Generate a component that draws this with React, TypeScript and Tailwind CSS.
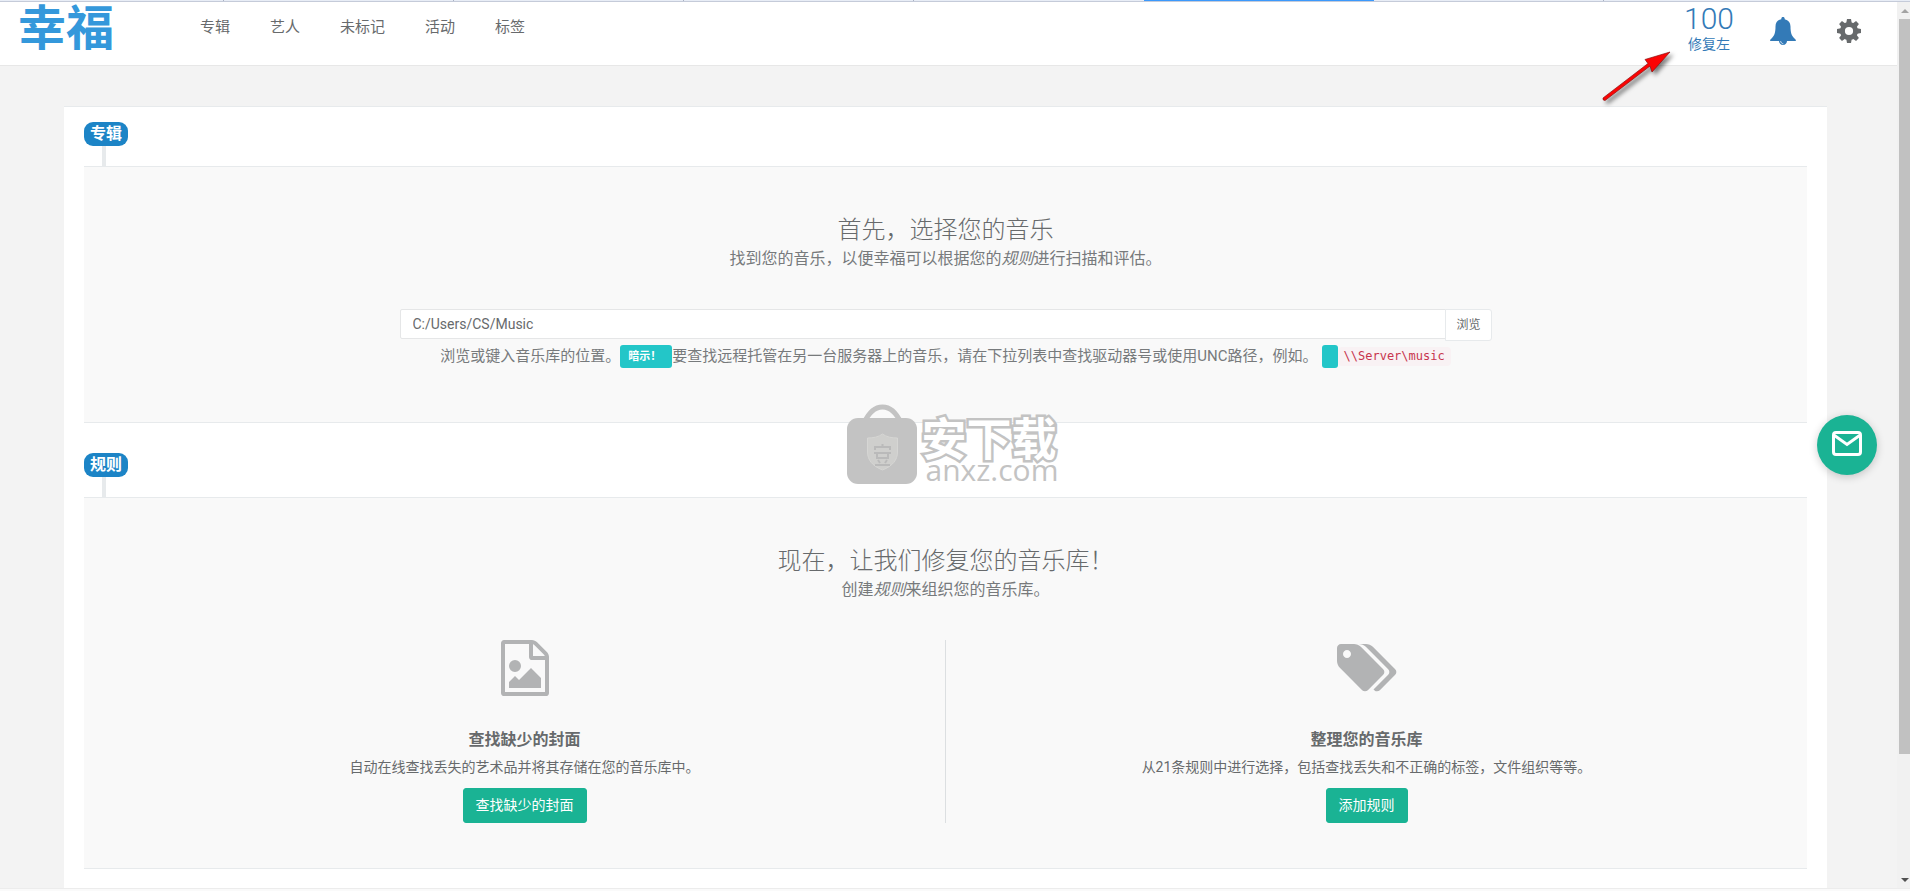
import { useState } from 'react';
import type { ReactNode } from 'react';

const NAV = ['专辑', '艺人', '未标记', '活动', '标签'];

const TOOTH_ANGLES = [0, 45, 90, 135, 180, 225, 270, 315];

function BellIcon() {
  return (
    <svg width="26" height="28" viewBox="0 0 26 28" fill="currentColor" aria-hidden="true">
      <path d="M13 0c1 0 1.700.7 1.700 1.700v.5c3.700.9 5.800 3.300 5.800 7.300 0 6.200 1.200 9.300 3.500 11.400 1.100 1 1.900 1.600 1.900 3.100H.1c0-1.500.8-2.100 1.900-3.100 2.300-2.100 3.500-5.200 3.500-11.400 0-4 2.100-6.400 5.800-7.300v-.5C11.300.7 12 0 13 0z" />
      <path d="M9 24h8c0 2.300-1.700 4-4 4s-4-1.700-4-4z" />
      <path d="M10.700 24.500c.3 1.300 1 2 2.300 2.300" fill="none" stroke="#fff" strokeWidth=".8" strokeLinecap="round" />
    </svg>
  );
}

function CogIcon() {
  return (
    <svg width="24" height="24" viewBox="0 0 24 24" aria-hidden="true">
      <g fill="currentColor">
        {TOOTH_ANGLES.map(a => (
          <path key={a} d="M10 0h4l.9 5H9.100z" transform={`rotate(${a} 12 12)`} />
        ))}
      </g>
      <circle cx="12" cy="12" r="6.600" fill="none" stroke="currentColor" strokeWidth="5" />
    </svg>
  );
}

function MailIcon() {
  return (
    <svg width="30" height="25" viewBox="0 0 30 25" fill="none" stroke="#fff" strokeWidth="3" aria-hidden="true">
      <rect x="1.500" y="1.500" width="27" height="22" rx="2.500" />
      <path d="M2.500 4.500 15 13.500l12.500-9" />
    </svg>
  );
}

function FileImageIcon() {
  return (
    <svg width="56" height="56" viewBox="0 0 1792 1792" fill="currentColor" aria-hidden="true">
      <path d="M1596 380q28 28 48 76t20 88v1152q0 40-28 68t-68 28h-1344q-40 0-68-28t-28-68v-1600q0-40 28-68t68-28h896q40 0 88 20t76 48zm-444-244v376h376q-10-29-22-41l-313-313q-12-12-41-22zm384 1528v-1024h-416q-40 0-68-28t-28-68v-416h-768v1536h1280zm-128-448v320h-1024v-192l192-192 128 128 384-384zm-832-192q-80 0-136-56t-56-136 56-136 136-56 136 56 56 136-56 136-136 56z" />
    </svg>
  );
}

function TagsIcon() {
  return (
    <svg width="60" height="56" viewBox="128 0 1920 1792" fill="currentColor" aria-hidden="true">
      <path d="M576 448q0-53-37.500-90.500t-90.500-37.500-90.500 37.500-37.500 90.500 37.500 90.500 90.500 37.500 90.500-37.500 37.500-90.500zm1067 576q0 53-37 90l-491 492q-39 37-91 37-53 0-90-37l-715-716q-38-37-64.500-101t-26.500-117v-416q0-52 38-90t90-38h416q53 0 117 26.500t102 64.500l715 714q37 39 37 91zm384 0q0 53-37 90l-491 492q-39 37-91 37-36 0-59-14t-53-45l470-470q37-37 37-90 0-52-37-91l-715-714q-38-38-102-64.500t-117-26.500h224q53 0 117 26.500t102 64.500l715 714q37 39 37 91z" />
    </svg>
  );
}

// Shopping bag with a shield, next to the site name
function Watermark() {
  return (
    <div className="pointer-events-none absolute top-[402px] left-1/2 ml-[-103px] flex gap-1 text-[#c3c3c3]">
      <svg width="72" height="82" viewBox="0 0 72 82" aria-hidden="true">
        <path d="M18 19C23 8 29 3 36.500 3S50 8 55 19" fill="none" stroke="currentColor" strokeWidth="5" />
        <rect x="1" y="14" width="70" height="66" rx="11" fill="currentColor" />
        <path d="M36.500 30c4 3 9 4 15 4v14c0 8-5 14-15 18-10-4-15-10-15-18V34c6 0 11-1 15-4z" fill="#cfcfcd" stroke="#d6d6d4" />
        <path d="M36.500 40v3M29 46v-3h15v3M28 49h17M31 49v5h11v-5M32 56l2 3M41 56l-2 3M29 61h15" fill="none" stroke="#bababa" strokeWidth="2" />
      </svg>
      <div className="flex flex-col">
        <span className="mt-[15px] text-[45px] leading-[44px] font-bold text-white [-webkit-text-stroke:5px_#c3c3c3] [paint-order:stroke_fill] [stroke-linejoin:round]">安下载</span>
        <span className="pl-1 font-['Open_Sans'] text-[30px] leading-[14px]">anxz.com</span>
      </div>
    </div>
  );
}

function Section({ label, children }: { label: string; children: ReactNode }) {
  return (
    <section>
      <h2 className="flex h-6 w-fit items-center rounded-[9px] bg-[#1c84c6] px-[6px] text-base leading-6 font-bold text-white">
        {label}
      </h2>
      <div className="ml-[18px] h-5 w-1 bg-[#e7eaec]" />
      <div className="flex flex-col items-center border-y border-[#e7eaec] bg-[#f9f9f9] px-5 pt-12 text-center">
        {children}
      </div>
    </section>
  );
}

function Feature({ icon, title, text, action }: { icon: ReactNode; title: string; text: string; action: string }) {
  return (
    <div className="flex flex-1 flex-col items-center">
      <div className="text-[#b2b3b4]">{icon}</div>
      <h4 className="mt-8 text-base leading-6 font-bold">{title}</h4>
      <p className="text-sm leading-[30px]">{text}</p>
      <button className="mt-[6px] h-[35px] rounded-[3px] border border-[#1ab394] bg-[#1ab394] px-3 pb-px text-sm text-white">
        {action}
      </button>
    </div>
  );
}

export default function App() {
  const [path, setPath] = useState('C:/Users/CS/Music');

  return (
    <div
      lang="zh-CN"
      className="flex min-h-screen flex-col bg-[#f3f3f3] font-[Roboto,'Noto_Sans_CJK_SC',sans-serif] text-[#676a6c]"
    >
      {/* Bottom edge of the browser tabs */}
      <div className="flex h-[2px] overflow-hidden border-b border-[#c5cbd9] bg-[#e8edf6]">
        <div className="w-[224px] shrink-0 border-r border-[#aab2c4]" />
        <div className="w-[230px] shrink-0 border-r border-[#aab2c4]" />
        <div className="w-[230px] shrink-0 border-r border-[#aab2c4]" />
        <div className="w-[230px] shrink-0 border-r border-[#aab2c4]" />
        <div className="w-[230px] shrink-0" />
        <div className="-mb-px w-[230px] shrink-0 bg-[#3b99fc]" />
        <div className="w-[230px] shrink-0 border-r border-[#aab2c4]" />
      </div>

      <div className="flex flex-1">
        <div className="relative flex min-w-0 flex-1 flex-col">
          <header className="flex h-16 items-start border-b border-[#e7e7e7] bg-white pl-[18px]">
            <a href="#" className="text-5xl leading-[54px] font-bold text-[#3498db]">幸福</a>
            <nav className="ml-[86px] flex gap-10 text-[15px] leading-[50px]">
              {NAV.map(item => (
                <a key={item} href="#">{item}</a>
              ))}
            </nav>
            <div className="ml-auto flex items-start pr-9">
              <a href="#" className="flex flex-col items-center text-[#337ab7]">
                <span className="text-[30px] leading-[34px] font-light">100</span>
                <span className="text-sm leading-4">修复左</span>
              </a>
              <button aria-label="通知" className="mt-[15px] ml-9 text-[#337ab7]"><BellIcon /></button>
              <button aria-label="设置" className="mt-[17px] ml-[41px]"><CogIcon /></button>
            </div>
          </header>

          <main className="mr-[70px] ml-16 mt-10 flex flex-1 flex-col gap-[30px] border-t border-[#e7eaec] bg-white px-5 pt-[15px] pb-[19px]">
            <Section label="专辑">
              <h3 className="text-2xl leading-[30px] font-light">首先，选择您的音乐</h3>
              <p className="text-base leading-7 text-[#777a7c]">
                找到您的音乐，以便幸福可以根据您的<em>规则</em>进行扫描和评估。
              </p>
              <div className="mt-9 flex h-8 w-full max-w-[1092px] items-start">
                <input
                  type="text"
                  aria-label="音乐库位置"
                  value={path}
                  onChange={e => setPath(e.target.value)}
                  className="h-[30px] min-w-0 flex-1 rounded-l-[2px] border border-[#e5e6e7] bg-white px-3 text-sm"
                />
                <button className="-ml-px h-8 rounded-r-[3px] border border-[#e7eaec] bg-white px-[10px] text-xs">浏览</button>
              </div>
              <div className="mt-1 mb-[54px] flex h-[23px] items-center text-[15px] text-[#777a7c]">
                <span>浏览或键入音乐库的位置。</span>
                <span className="h-[23px] rounded-[3px] bg-[#23c6c8] pr-[11px] pl-2 text-[11px] leading-[23px] font-bold text-white">暗示！</span>
                <span>要查找远程托管在另一台服务器上的音乐，请在下拉列表中查找驱动器号或使用UNC路径，例如。</span>
                <span className="ml-1 h-[23px] w-4 rounded-[3px] bg-[#23c6c8]" />
                <code className="rounded-[4px] bg-[#f9f2f4] px-[6px] font-['DejaVu_Sans_Mono',monospace] text-xs leading-[19px] text-[#c7354e]">
                  \\Server\music
                </code>
              </div>
            </Section>

            <Section label="规则">
              <h3 className="text-2xl leading-[30px] font-light">现在，让我们修复您的音乐库！</h3>
              <p className="text-base leading-7 text-[#777a7c]">
                创建<em>规则</em>来组织您的音乐库。
              </p>
              <div className="mt-9 mb-[45px] flex w-full">
                <Feature
                  icon={<FileImageIcon />}
                  title="查找缺少的封面"
                  text="自动在线查找丢失的艺术品并将其存储在您的音乐库中。"
                  action="查找缺少的封面"
                />
                <div className="w-px bg-[#dcdfe1]" />
                <Feature
                  icon={<TagsIcon />}
                  title="整理您的音乐库"
                  text="从21条规则中进行选择，包括查找丢失和不正确的标签，文件组织等等。"
                  action="添加规则"
                />
              </div>
            </Section>
          </main>

          <Watermark />

          {/* Pointer to the remaining fixes */}
          <svg className="pointer-events-none absolute top-[46px] right-[225px] drop-shadow-[3px_3px_2px_rgba(0,0,0,0.5)]" width="76" height="58" viewBox="0 0 76 58" aria-hidden="true">
            <path d="M74 4 56 24l-2-6L9 52.500q-2.500 0-2-2.500L52 15.500l-3-4z" fill="#fb0404" stroke="#8d1010" strokeWidth=".7" />
          </svg>

          <button
            aria-label="发送邮件"
            className="absolute top-[413px] right-5 flex size-[60px] items-center justify-center rounded-full bg-[#1ab394] pb-1 shadow-[0_2px_8px_rgba(0,0,0,0.2)]"
          >
            <MailIcon />
          </button>
        </div>

        {/* Scrollbar */}
        <div className="flex w-[13px] flex-col items-end bg-[#f1f1f1]">
          <div className="flex h-[17px] w-[11px] items-center justify-center">
            <svg width="8" height="4" viewBox="0 0 8 4" fill="#a3a3a3" aria-hidden="true"><path d="M0 4 4 0l4 4z" /></svg>
          </div>
          <div className="h-[83%] w-[11px] bg-[#c1c1c1]" />
          <div className="mt-auto flex h-[17px] w-[11px] items-center justify-center">
            <svg width="8" height="4" viewBox="0 0 8 4" fill="#505050" aria-hidden="true"><path d="m0 0 4 4 4-4z" /></svg>
          </div>
        </div>
      </div>

      <div className="h-[3px] border-t border-[#ececec] bg-[#fafafa]" />
    </div>
  );
}
